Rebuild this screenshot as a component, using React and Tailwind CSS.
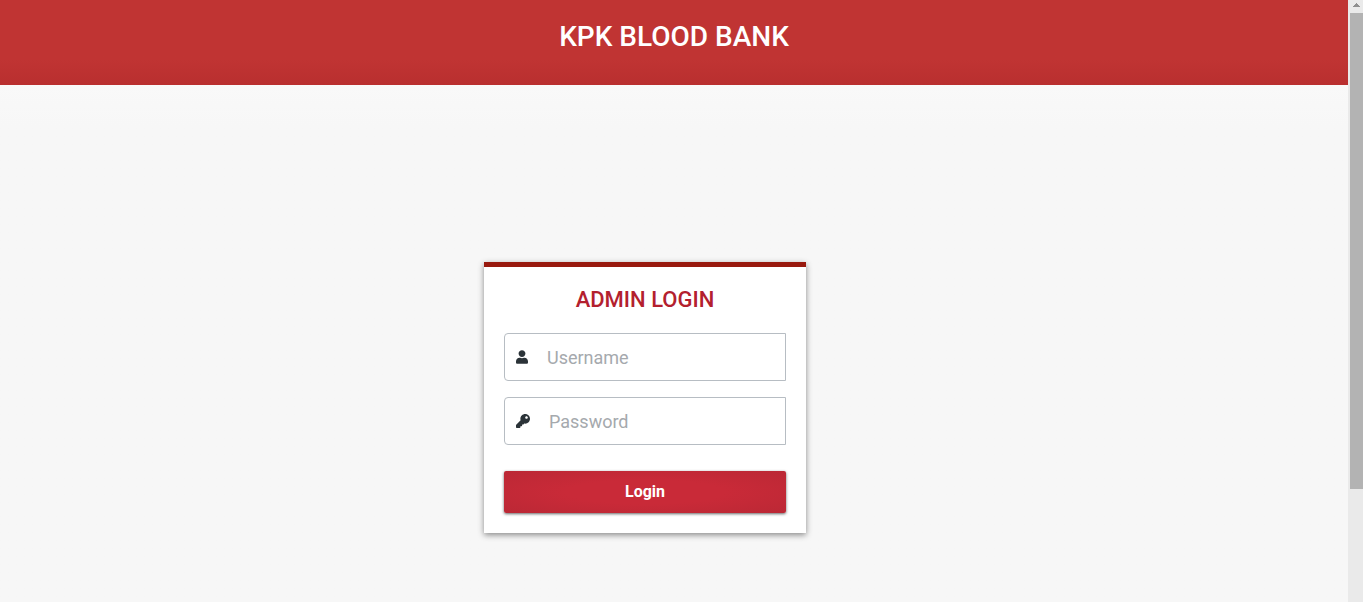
import { FaKey, FaUser } from "react-icons/fa";

function Field({ id, type, label, icon }) {
  return (
    <div className="flex h-12 items-center gap-[19px] rounded-l border border-[#b7bdc3] bg-white pl-[11px]">
      <label htmlFor={id} aria-label={label} className="shrink-0 text-[#2b3338]">
        {icon}
      </label>
      <input
        id={id}
        type={type}
        placeholder={label}
        className="h-full w-full min-w-0 bg-transparent text-lg text-gray-700 outline-none placeholder:text-[#a5a9ad]"
      />
    </div>
  );
}

function ScrollRail() {
  return (
    <div aria-hidden="true" className="flex w-[15px] shrink-0 flex-col bg-[#eaeaea] pl-[2px]">
      <div className="flex h-[13px] shrink-0 items-start justify-center pt-[3px]">
        <svg width="7" height="4" viewBox="0 0 7 4" shapeRendering="crispEdges">
          <path d="M3 0h1v1h1v1h1v1h1v1H0V3h1V2h1V1h1z" fill="#8f8f8f" />
        </svg>
      </div>
      <div className="h-[79%] bg-[#b3b3b3]" />
    </div>
  );
}

export default function App() {
  return (
    <div className="flex h-screen overflow-hidden bg-[#f7f7f7] font-['Roboto',sans-serif]">
      <div className="flex min-w-0 flex-1 flex-col">
        <header className="bg-linear-to-b from-[#c03433] from-70% to-[#b92f2f] pt-5 pb-[31px] text-center">
          <h1 className="text-[28px] leading-[34px] font-medium text-white">KPK BLOOD BANK</h1>
        </header>
        <main className="flex flex-1 items-start justify-center bg-linear-to-b from-[#f9f9f9] to-[#f7f7f7] to-8% pt-[177px] pr-[58px]">
          <form
            onSubmit={(e) => e.preventDefault()}
            className="w-[322px] border-t-5 border-[#98190e] bg-white px-5 pt-5 pb-5 shadow-[0_2px_6px_rgba(0,0,0,0.45)]"
          >
            <h2 className="text-center text-[22px] leading-[26px] font-medium text-[#b3202e]">ADMIN LOGIN</h2>
            <div className="mt-5 flex flex-col gap-4">
              <Field id="username" type="text" label="Username" icon={<FaUser className="h-[14px] w-3" />} />
              <Field id="password" type="password" label="Password" icon={<FaKey className="size-[14px]" />} />
            </div>
            <button
              type="submit"
              className="mt-[26px] block h-[42px] w-full rounded-xs bg-radial-[ellipse_at_center] from-[#c92a38] from-40% to-[#bb2835] text-base font-bold text-white shadow-[0_1px_3px_rgba(0,0,0,0.6)]"
            >
              Login
            </button>
          </form>
        </main>
      </div>
      <ScrollRail />
    </div>
  );
}
